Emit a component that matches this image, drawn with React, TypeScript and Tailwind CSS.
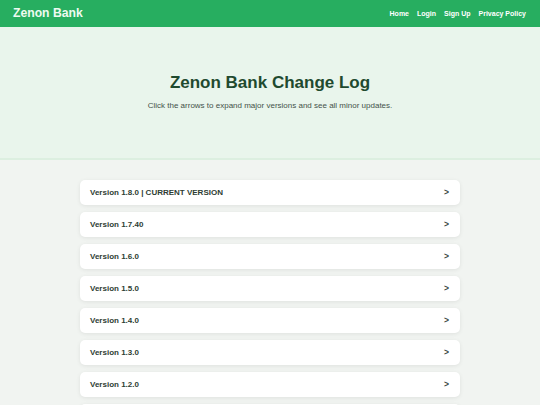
import React from 'react';

const VERSIONS = [
  'Version 1.8.0 | CURRENT VERSION',
  'Version 1.7.40',
  'Version 1.6.0',
  'Version 1.5.0',
  'Version 1.4.0',
  'Version 1.3.0',
  'Version 1.2.0',
  'Version 1.1.0',
];

const NAV = ['Home', 'Login', 'Sign Up', 'Privacy Policy'];

const App: React.FC = () => {
  return (
    <div className="min-h-screen bg-[#f1f4f1] font-['Liberation_Sans',Arial,sans-serif]">
      {/* Header */}
      <header className="h-[27px] bg-[#27ae60] flex items-center justify-between pl-[13px] pr-[14px]">
        <div className="text-[12.2px] font-bold text-[#eefaf1] leading-none">Zenon Bank</div>
        <nav className="flex items-center gap-[8px]">
          {NAV.map(n => (
            <span key={n} className="text-[7px] font-bold text-white leading-none">{n}</span>
          ))}
        </nav>
      </header>

      {/* Hero */}
      <section className="h-[133px] bg-[#e9f5ec] border-b-2 border-[#dcefe0] flex flex-col items-center pt-[47px]">
        <h1 className="text-[17px] font-bold text-[#1f4a2f] leading-none">Zenon Bank Change Log</h1>
        <p className="mt-[11px] text-[8px] text-[#44524a] leading-none">
          Click the arrows to expand major versions and see all minor updates.
        </p>
      </section>

      {/* Versions */}
      <main className="w-[380px] mx-auto pt-[20px] flex flex-col gap-[7px]">
        {VERSIONS.map(v => (
          <div key={v}
            className="h-[25px] bg-white rounded-[5px] shadow-[0_1px_4px_rgba(0,0,0,0.08)] flex items-center justify-between pl-[10px] pr-[11px]">
            <span className="text-[8px] font-bold text-[#2e3d33]">{v}</span>
            <span className="text-[8.5px] font-bold text-[#3a463f]">&gt;</span>
          </div>
        ))}
      </main>
    </div>
  );
};

export default App;
